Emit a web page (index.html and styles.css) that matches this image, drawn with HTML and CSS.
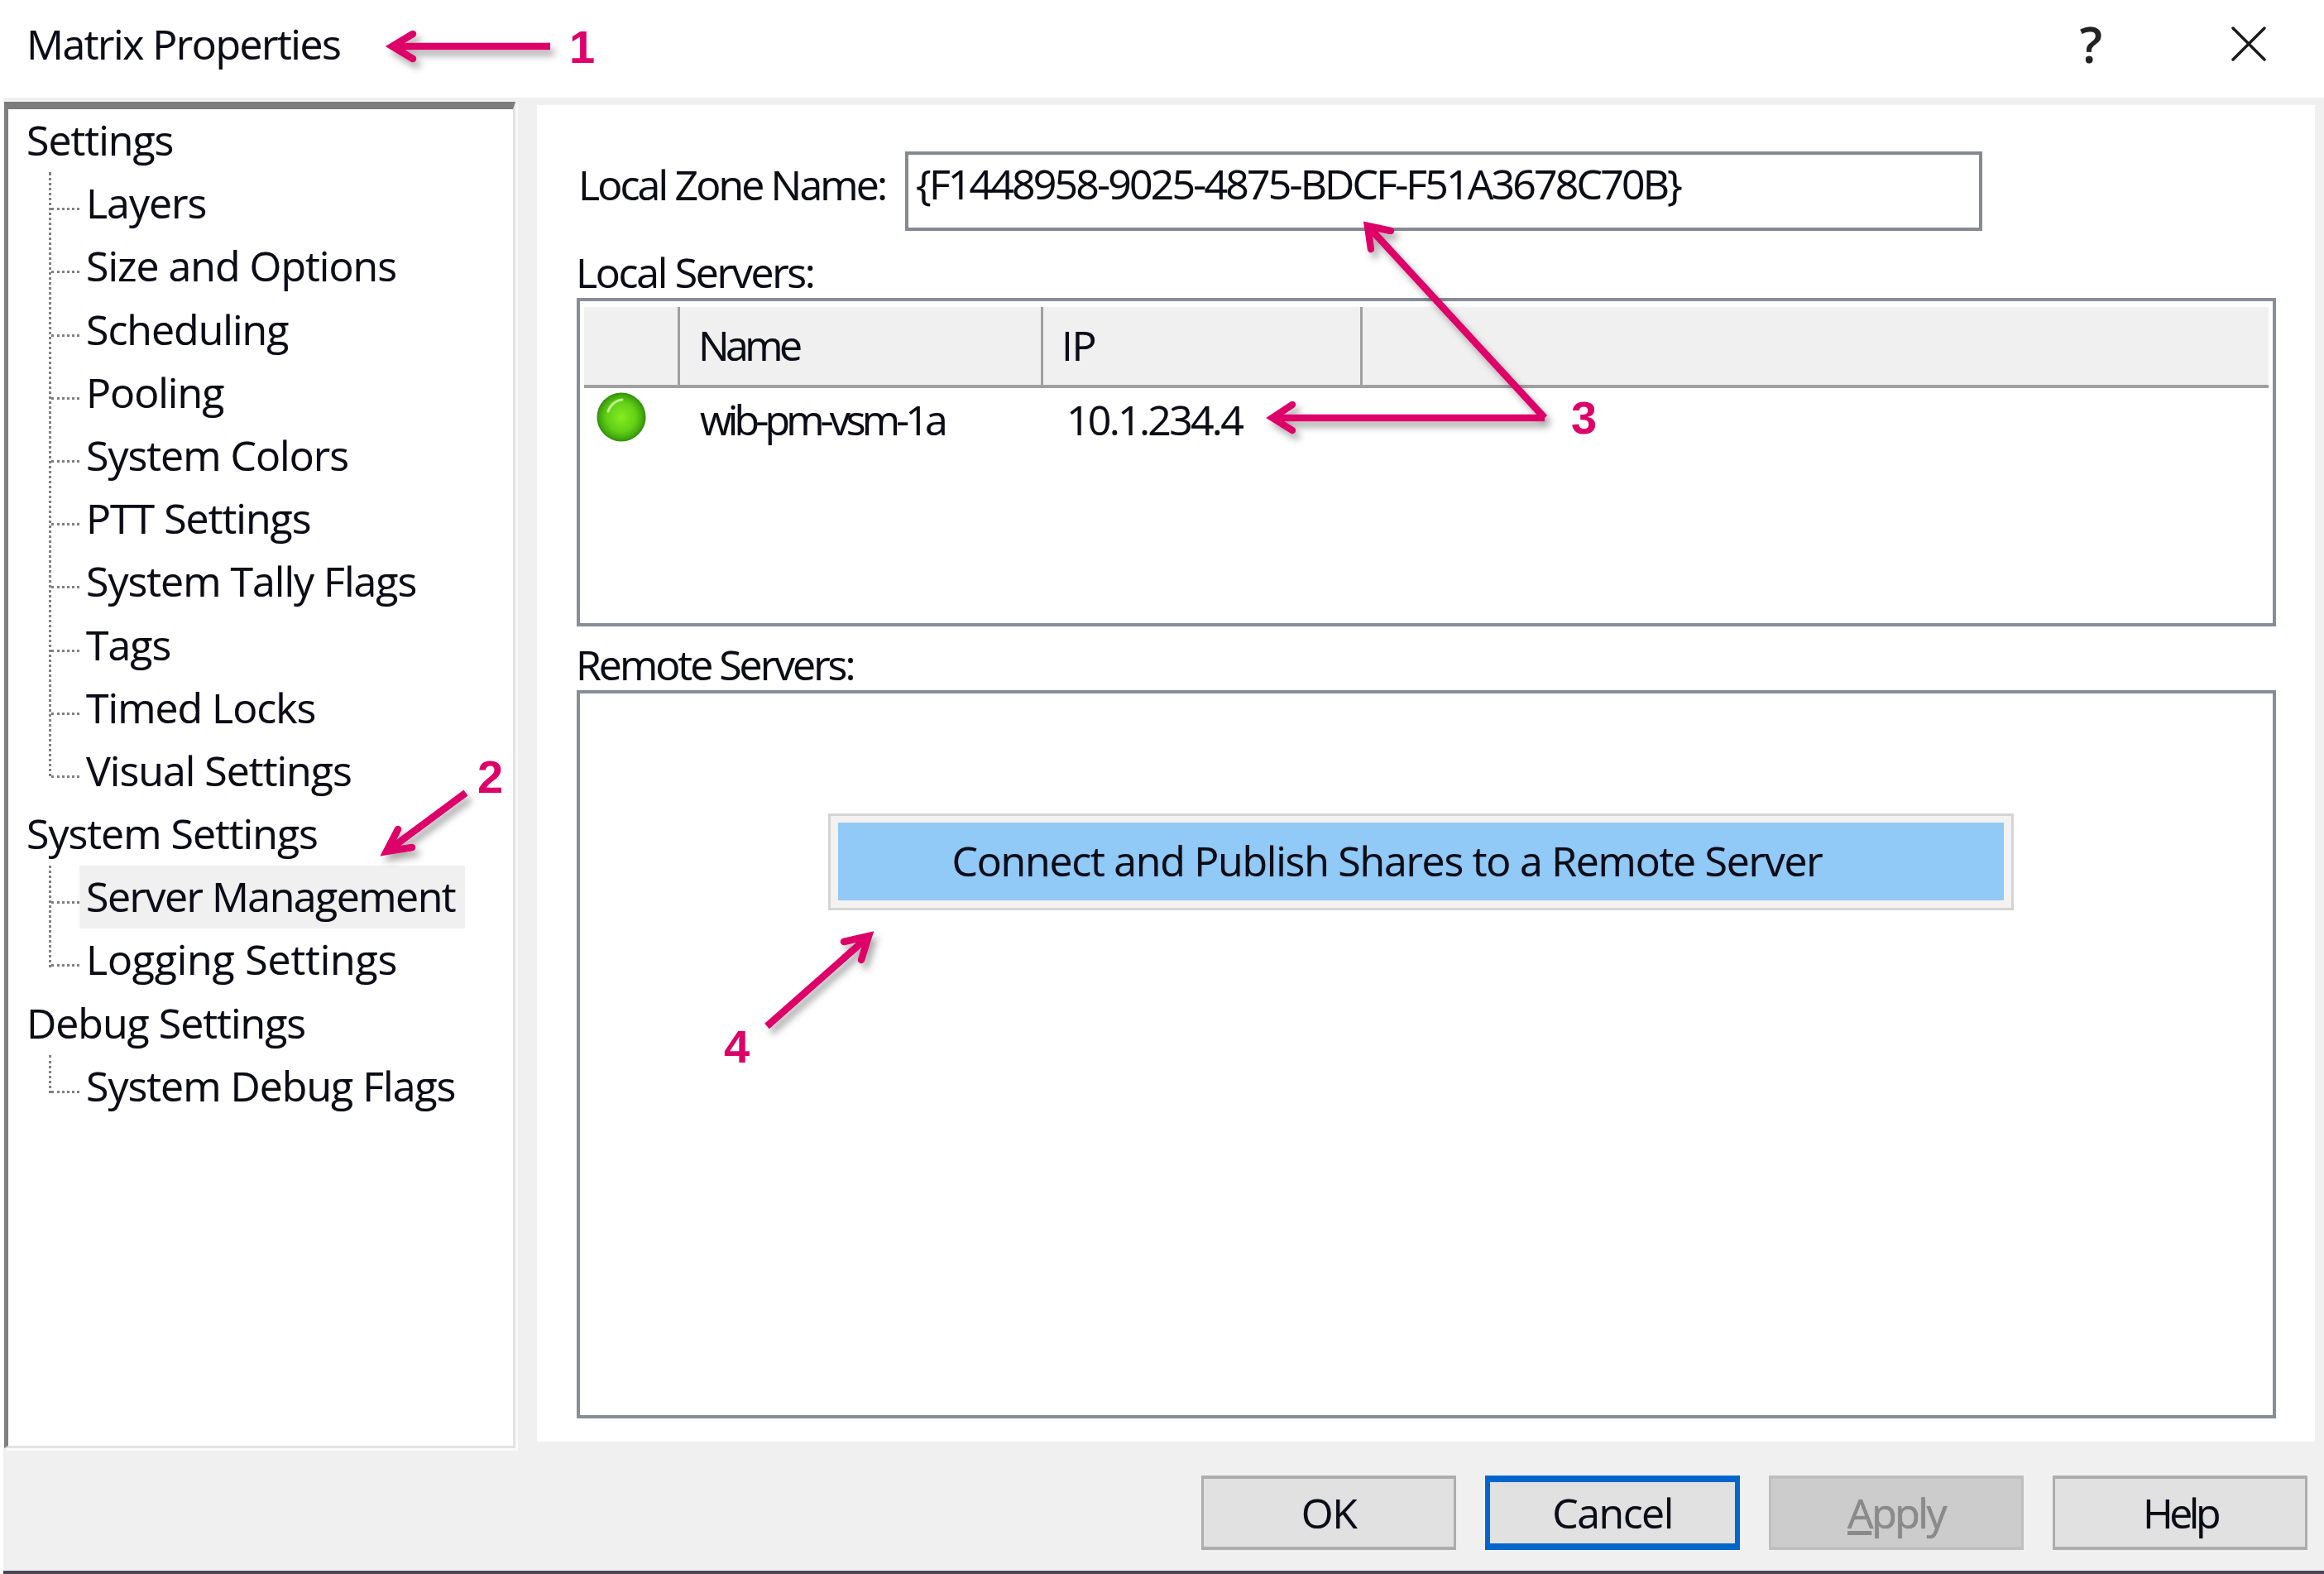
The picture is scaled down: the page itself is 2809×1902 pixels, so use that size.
FILE: index.html
```html
<!DOCTYPE html>
<html lang="en">
<head>
<meta charset="utf-8">
<title>Matrix Properties</title>
<link rel="stylesheet" href="styles.css">
</head>
<body>
<div class="window">
  <header class="titlebar">
    <span class="title">Matrix Properties</span>
    <div class="caption">
      <span class="help-glyph">?</span>
      <svg class="close-icon" viewBox="0 0 42 42"><path d="M2 2 L40 40 M40 2 L2 40"/></svg>
    </div>
  </header>

  <main class="body">
    <nav class="tree">
      <div class="node root">Settings</div>
      <div class="group">
        <div class="node leaf"><span class="dash"></span><span class="text">Layers</span></div>
        <div class="node leaf"><span class="dash"></span><span class="text">Size and Options</span></div>
        <div class="node leaf"><span class="dash"></span><span class="text">Scheduling</span></div>
        <div class="node leaf"><span class="dash"></span><span class="text">Pooling</span></div>
        <div class="node leaf"><span class="dash"></span><span class="text">System Colors</span></div>
        <div class="node leaf"><span class="dash"></span><span class="text">PTT Settings</span></div>
        <div class="node leaf"><span class="dash"></span><span class="text">System Tally Flags</span></div>
        <div class="node leaf"><span class="dash"></span><span class="text">Tags</span></div>
        <div class="node leaf"><span class="dash"></span><span class="text">Timed Locks</span></div>
        <div class="node leaf"><span class="dash"></span><span class="text">Visual Settings</span></div>
      </div>
      <div class="node root">System Settings</div>
      <div class="group">
        <div class="node leaf"><span class="dash"></span><span class="text selected">Server Management</span></div>
        <div class="node leaf"><span class="dash"></span><span class="text loose">Logging Settings</span></div>
      </div>
      <div class="node root">Debug Settings</div>
      <div class="group">
        <div class="node leaf"><span class="dash"></span><span class="text">System Debug Flags</span></div>
      </div>
    </nav>

    <section class="content">
      <div class="zone-row">
        <label class="zone-label">Local Zone Name:</label>
        <div class="zone-input">{F1448958-9025-4875-BDCF-F51A3678C70B}</div>
      </div>

      <div class="section-label local-label">Local Servers:</div>
      <div class="list local-list">
        <div class="list-head">
          <div class="col col-icon"></div>
          <div class="col col-name">Name</div>
          <div class="col col-ip">IP</div>
          <div class="col col-rest"></div>
        </div>
        <div class="list-row">
          <div class="cell cell-icon">
            <svg class="status-dot" viewBox="0 0 60 60">
              <defs>
                <radialGradient id="dotFill" cx="50%" cy="50%" r="50%">
                  <stop offset="0" stop-color="#86ec20"/>
                  <stop offset="0.6" stop-color="#62d016"/>
                  <stop offset="0.88" stop-color="#43a80e"/>
                  <stop offset="1" stop-color="#2f8a0c"/>
                </radialGradient>
              </defs>
              <circle cx="30" cy="30" r="29.5" fill="url(#dotFill)"/>
              <path class="dot-shine" d="M14 23 C17 15 23 10 31 9"/>
            </svg>
          </div>
          <div class="cell cell-name">wib-pm-vsm-1a</div>
          <div class="cell cell-ip">10.1.234.4</div>
        </div>
      </div>

      <div class="section-label remote-label">Remote Servers:</div>
      <div class="list remote-list">
        <button class="connect" type="button"><span class="connect-fill">Connect and Publish Shares to a Remote Server</span></button>
      </div>
    </section>
  </main>

  <footer class="footer">
    <button class="btn" type="button">OK</button>
    <button class="btn btn-default" type="button">Cancel</button>
    <button class="btn btn-disabled" type="button"><u>A</u>pply</button>
    <button class="btn btn-help" type="button">Help</button>
  </footer>
  <div class="edge"></div>

  <svg class="annotations" viewBox="0 0 2809 1902" width="2809" height="1902">
    <defs>
      <filter id="arrowShadow" filterUnits="userSpaceOnUse" x="0" y="0" width="2809" height="1902">
        <feDropShadow dx="5" dy="7" stdDeviation="4" flood-color="#000" flood-opacity="0.33"/>
      </filter>
    </defs>
    <g filter="url(#arrowShadow)">
      <path class="shaft" d="M665 56 H476"/>
      <path class="head" d="M499 41 L474 56 L499 71"/>
      <path class="shaft" d="M563 958 L470 1027"/>
      <path class="head" d="M481 1002 L467 1029 L498 1024"/>
      <path class="shaft" d="M1867 505 H1540"/>
      <path class="head" d="M1562 489 L1538 505 L1562 520"/>
      <path class="shaft" d="M1867 505 L1655 275"/>
      <path class="head" d="M1681 279 L1653 273 L1657 301"/>
      <path class="shaft" d="M927 1240 L1047 1134"/>
      <path class="head" d="M1020 1138 L1050 1131 L1041 1160"/>
    </g>
    <text class="num" x="688" y="76">1</text>
    <text class="num" x="577" y="958">2</text>
    <text class="num" x="1899" y="524">3</text>
    <text class="num" x="875" y="1284">4</text>
  </svg>
</div>
</body>
</html>
```

FILE: styles.css
```css
* { box-sizing: border-box; }
html, body { margin: 0; padding: 0; }
body { width: 2809px; height: 1902px; overflow: hidden; background: #fff; }

.window {
  position: relative;
  width: 2809px;
  height: 1902px;
  display: flex;
  flex-direction: column;
  background: #f0f0f0;
  border-left: 4px solid #fff;
  font-family: "Open Sans", "Liberation Sans", sans-serif;
  font-size: 50px;
  color: #0c0c16;
  letter-spacing: -1.5px;
  text-shadow: 0 0 1px rgba(0, 0, 20, 0.45);
}

.titlebar {
  height: 118px;
  flex: none;
  background: #fff;
  display: flex;
  align-items: center;
  justify-content: space-between;
  padding: 0 70px 12px 28px;
}
.title { line-height: 76px; }
.caption { display: flex; align-items: center; gap: 156px; }
.help-glyph { font-size: 60px; line-height: 60px; font-weight: 600; color: #222; letter-spacing: 0; }
.close-icon { width: 42px; height: 42px; display: block; }
.close-icon path { stroke: #1a1a1a; stroke-width: 3.5; fill: none; stroke-linecap: round; }

.body {
  flex: none;
  height: 1622px;
  display: flex;
  align-items: flex-start;
  padding: 5px 11px 0 1px;
  gap: 26px;
}

.tree {
  flex: none;
  position: relative;
  z-index: 1;
  width: 618px;
  height: 1627px;
  background: #fff;
  border-left: 5px solid #808080;
  border-top: 9px solid #7c7c7c;
  border-right: 3px solid #e3e3e3;
  border-bottom: 3px solid #e3e3e3;
  box-shadow: 3px 3px 0 #fafafa;
  letter-spacing: -1px;
  overflow: hidden;
}
.node { height: 76.2px; line-height: 75.2px; white-space: nowrap; }
.root { padding-left: 22px; }
.group {
  margin-left: 49px;
  border-left: 3px dotted #808080;
  position: relative;
}
.group::after {
  content: "";
  position: absolute;
  left: -3px;
  bottom: 0;
  width: 3px;
  height: 30px;
  background: #fff;
}
.leaf { display: flex; align-items: flex-start; }
.dash { width: 34px; flex: none; margin-top: 43px; border-top: 3px dotted #808080; }
.text { padding-left: 8px; }
.selected { height: 76.2px; padding-right: 12px; background: #f0f0f0; letter-spacing: -1.5px; }
.loose { letter-spacing: -0.2px; }

.content {
  flex: none;
  width: 2149px;
  height: 1615px;
  background: #fff;
  margin-top: 4px;
  padding: 56px 0 0 48px;
}

.zone-row { display: flex; align-items: flex-start; height: 96px; }
.zone-label { width: 397px; padding-left: 2px; line-height: 81px; letter-spacing: -2.85px; white-space: nowrap; }
.zone-input {
  width: 1302px;
  height: 96px;
  border: 4px solid #858a92;
  padding-left: 9px;
  line-height: 70px;
  letter-spacing: -2.85px;
  white-space: nowrap;
}

.section-label { margin-left: -1px; white-space: nowrap; }
.local-label { margin-top: 10px; height: 71px; line-height: 80px; letter-spacing: -2.3px; }
.remote-label { margin-top: 5px; height: 72px; line-height: 82px; letter-spacing: -3px; }

.list { border: 4px solid #868e98; background: #fff; width: 2054px; }
.local-list { height: 397px; padding: 7px 5px 0 5px; }
.remote-list { height: 880px; padding: 145px 0 0 300px; }

.list-head {
  display: flex;
  height: 98px;
  background: #f0f0f0;
  border-bottom: 4px solid #a0a0a0;
}
.col { height: 100%; border-right: 3px solid #a0a0a0; line-height: 93px; white-space: nowrap; padding-left: 22px; }
.col-icon { width: 116px; }
.col-name { width: 439px; letter-spacing: -4.6px; }
.col-ip { width: 386px; }
.col-rest { flex: 1; border-right: none; }

.list-row { display: flex; height: 77px; align-items: flex-start; }
.cell { line-height: 77px; white-space: nowrap; }
.cell-icon { width: 140px; padding: 5px 0 0 15px; }
.status-dot { width: 60px; height: 60px; display: block; }
.dot-shine { fill: none; stroke: #c8f898; stroke-width: 3; stroke-linecap: round; opacity: 0.85; }
.cell-name { width: 443px; letter-spacing: -4.9px; }
.cell-ip { width: 300px; letter-spacing: -2.75px; }

.connect {
  display: block;
  width: 1433px;
  height: 117px;
  padding: 8px 9px 9px;
  border: 3px solid #d4d4d4;
  background: #f4f2f0;
  font: inherit;
  letter-spacing: inherit;
  color: inherit;
  text-shadow: inherit;
}
.connect-fill {
  display: block;
  height: 100%;
  padding: 3px 82px 0 0;
  background: #91c9f7;
  line-height: 87px;
  letter-spacing: -1.25px;
  text-align: center;
  white-space: nowrap;
}

.footer {
  flex: 1;
  display: flex;
  justify-content: flex-end;
  align-items: flex-start;
  gap: 35px;
  padding: 43px 20px 0 0;
}
.btn {
  width: 308px;
  height: 90px;
  background: #e1e1e1;
  border: 3px solid #adadad;
  border-top-width: 4px;
  border-bottom-width: 4px;
  font: inherit;
  letter-spacing: inherit;
  color: inherit;
  text-shadow: inherit;
  padding: 0;
}
.btn-default { border: 6px solid #0066cc; border-top-width: 8px; border-bottom-width: 8px; }
.btn-disabled { background: #cccccc; border-color: #bfbfbf; color: #8a8a8a; letter-spacing: -2.5px; }
.btn-help { letter-spacing: -4.5px; }
.edge { flex: none; height: 4px; background: #4a4658; }

.annotations { position: absolute; left: -4px; top: 0; z-index: 2; pointer-events: none; }
.shaft { fill: none; stroke: #dd0068; stroke-width: 8.5; stroke-linecap: butt; }
.head { fill: none; stroke: #dd0068; stroke-width: 8.5; stroke-linecap: round; stroke-linejoin: miter; stroke-miterlimit: 10; }
.num { font-family: "Liberation Sans", sans-serif; font-weight: 700; font-size: 56px; fill: #dd0068; letter-spacing: 0; text-shadow: none; }
```
